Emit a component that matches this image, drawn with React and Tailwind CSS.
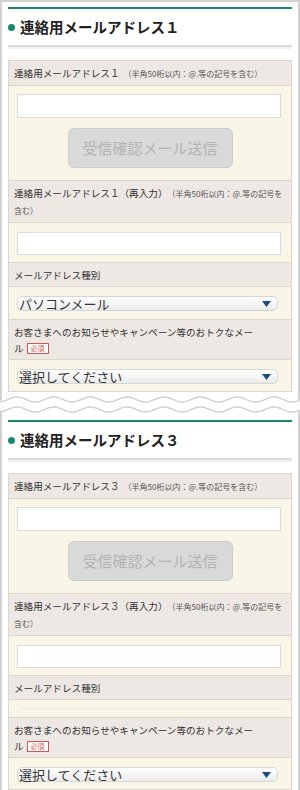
import React from "react";

const wavePath = (base) => {
  let d = "";
  for (let x = 0; x <= 300; x += 1) {
    const y = base - 2.5 * Math.cos((2 * Math.PI * (x - 17)) / 36.7);
    d += (x === 0 ? "M" : "L") + x + " " + y.toFixed(2) + " ";
  }
  return d;
};

const Tear = () => (
  <svg width="300" height="19" viewBox="0 0 300 19" className="block">
    <path d="M1 0 L1 5.5" stroke="#d2d2d2" strokeWidth="2" fill="none" />
    <path d="M299 0 L299 5.5" stroke="#d2d2d2" strokeWidth="2" fill="none" />
    <path d={wavePath(4.5)} stroke="#cfcfcf" strokeWidth="1.4" fill="none" />
    <path d={wavePath(14.5)} stroke="#cfcfcf" strokeWidth="1.4" fill="none" />
    <path d="M1 15.5 L1 19" stroke="#d2d2d2" strokeWidth="2" fill="none" />
    <path d="M299 15.5 L299 19" stroke="#d2d2d2" strokeWidth="2" fill="none" />
  </svg>
);

const Heading = ({ title }) => (
  <>
    <div className="h-[2px] bg-[#178a6c]" />
    <div className="flex h-[36px] items-center gap-[5px]">
      <span className="h-[7px] w-[7px] rounded-full bg-[#178a6c]" />
      <h2 className="text-[14.5px] font-bold leading-none text-[#222]">{title}</h2>
    </div>
    <div className="h-[2px] bg-[#dcdcdc]" />
    <div className="h-[2px] bg-[#f1f1f1]" />
  </>
);

const Note = () => (
  <span className="ml-[4px] text-[8px] text-[#555]">（半角50桁以内：@.等の記号を含む）</span>
);

const Label = ({ children }) => (
  <div className="border-b border-[#ddd6cd] bg-[#ede8e3] px-[5px] py-[3.5px] text-[9.6px] leading-[16px] text-[#333]">
    {children}
  </div>
);

const TextInput = () => (
  <div className="mr-[2px] h-[23px] border border-[#dcdcdc] bg-white" />
);

const Select = ({ value }) => (
  <div className="mr-[5px] flex h-[15px] items-center justify-between rounded-[5px] border border-[#d6d6d6] bg-gradient-to-b from-white to-[#ebebeb] pl-[1px] pr-[6px]">
    <span className="text-[13px] leading-none text-[#333]">{value}</span>
    <svg width="9" height="6" viewBox="0 0 9 6">
      <path d="M0 0 L9 0 L4.5 6 Z" fill="#1c4e7c" />
    </svg>
  </div>
);

const Required = () => (
  <span className="whitespace-nowrap">
    ル
    <span className="ml-[3px] inline-block border border-[#d9534f] bg-white px-[3px] align-middle text-[7px] leading-[9px] text-[#d9534f]">
      必須
    </span>
  </span>
);

const Section = ({ num, kind }) => (
  <div className="border border-[#dcd6cf]">
    <Label>
      連絡用メールアドレス{num}
      <Note />
    </Label>
    <div className="border-b border-[#ddd6cd] bg-[#faf6e7] px-[8px] pb-[12px] pt-[8px]">
      <div className="mr-[2px] h-[24px] border border-[#dcdcdc] bg-white" />
      <div className="mt-[10px] flex justify-center">
        <button className="flex h-[40px] w-[165px] items-center justify-center rounded-[6px] border border-[#cbcbcb] bg-[#d9d9d9] text-[15px] text-[#b3b3b3]">
          受信確認メール送信
        </button>
      </div>
    </div>
    <Label>
      連絡用メールアドレス{num}（再入力）
      <Note />
    </Label>
    <div className="border-b border-[#ddd6cd] bg-[#faf6e7] px-[8px] pb-[7px] pt-[9px]">
      <TextInput />
    </div>
    <Label>メールアドレス種別</Label>
    {kind ? (
      <div className="border-b border-[#ddd6cd] bg-[#faf6e7] px-[8px] pb-[8px] pt-[9px]">
        <Select value={kind} />
      </div>
    ) : (
      <div className="border-b border-[#ddd6cd] bg-[#faf6e7] px-[11px] pb-[8px] pt-[8px]">
        <div className="h-px bg-[#f0ead8]" />
      </div>
    )}
    <Label>
      お客さまへのお知らせやキャンペーン等のおトクなメー
      <Required />
    </Label>
    <div className="bg-[#faf6e7] px-[8px] pb-[7px] pt-[9px]">
      <Select value="選択してください" />
    </div>
  </div>
);

export default function App() {
  return (
    <div className="w-[300px] bg-white font-['Noto_Sans_CJK_JP',sans-serif]">
      <div className="border-x-2 border-t-2 border-[#d2d2d2] px-[6px] pb-[3px] pt-[5px]">
        <Heading title="連絡用メールアドレス１" />
        <div className="mt-[11px]">
          <Section num="１" kind="パソコンメール" />
        </div>
      </div>
      <Tear />
      <div className="border-x-2 border-b-2 border-[#d2d2d2] px-[6px] pb-[5px] pt-[6px]">
        <Heading title="連絡用メールアドレス３" />
        <div className="mt-[11px]">
          <Section num="３" />
        </div>
      </div>
    </div>
  );
}
